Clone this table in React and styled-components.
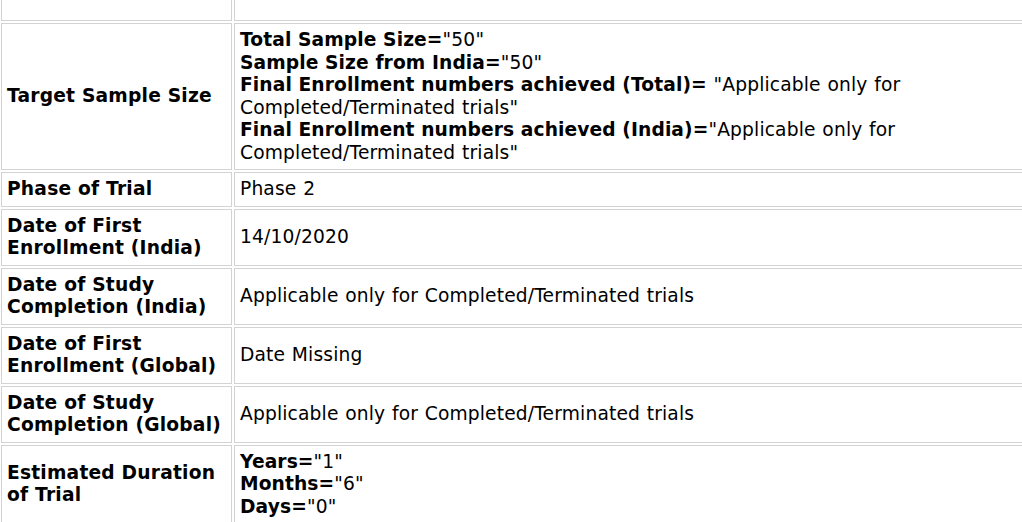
import React from "react";
import styled, { createGlobalStyle } from "styled-components";

const GlobalStyle = createGlobalStyle`
  html, body {
    margin: 0;
    padding: 0;
    background: #fff;
    overflow: hidden;
  }
  body {
    font-family: "DejaVu Sans", Verdana, sans-serif;
    color: #000;
  }
`;

const Table = styled.table`
  width: 1030px;
  margin: -16px 0 0 -1px;
  border-collapse: separate;
  border-spacing: 2px;
  table-layout: fixed;
  font-size: 18.67px;
  line-height: 22.5px;
`;

const Cell = styled.td`
  border: 1px solid #d3d3d3;
  padding: 5px;
  vertical-align: middle;
  text-align: left;
  box-sizing: border-box;
  letter-spacing: 0.15px;
  word-spacing: 0.6px;
  height: ${(p) => (p.$height ? `${p.$height}px` : "auto")};
`;

const LabelCell = styled(Cell)`
  font-weight: bold;
  letter-spacing: 0.2px;
  word-spacing: 0;
`;

const Key = styled.b`
  font-weight: bold;
  letter-spacing: 0.1px;
  word-spacing: 0;
`;

const Line = styled.div``;

const rows = [
  {
    label: "Target Sample Size",
    lines: [
      ["Total Sample Size=", '"50"'],
      ["Sample Size from India=", '"50"'],
      [
        "Final Enrollment numbers achieved (Total)=",
        ' "Applicable only for Completed/Terminated trials"',
      ],
      [
        "Final Enrollment numbers achieved (India)=",
        '"Applicable only for Completed/Terminated trials"',
      ],
    ],
  },
  { label: "Phase of Trial", text: "Phase 2" },
  { label: "Date of First Enrollment (India)", text: "14/10/2020" },
  {
    label: "Date of Study Completion (India)",
    text: "Applicable only for Completed/Terminated trials",
  },
  { label: "Date of First Enrollment (Global)", text: "Date Missing" },
  {
    label: "Date of Study Completion (Global)",
    text: "Applicable only for Completed/Terminated trials",
  },
  {
    label: "Estimated Duration of Trial",
    lines: [
      ["Years=", '"1"'],
      ["Months=", '"6"'],
      ["Days=", '"0"'],
    ],
  },
];

export default function App() {
  return (
    <>
      <GlobalStyle />
      <Table>
        <colgroup>
          <col style={{ width: 231 }} />
          <col />
        </colgroup>
        <tbody>
          <tr>
            <LabelCell $height={35}>&nbsp;</LabelCell>
            <Cell $height={35}>&nbsp;</Cell>
          </tr>
          {rows.map((row) => (
            <tr key={row.label}>
              <LabelCell>{row.label}</LabelCell>
              <Cell>
                {row.lines
                  ? row.lines.map(([k, v]) => (
                      <Line key={k}>
                        <Key>{k}</Key>
                        {v}
                      </Line>
                    ))
                  : row.text}
              </Cell>
            </tr>
          ))}
        </tbody>
      </Table>
    </>
  );
}
